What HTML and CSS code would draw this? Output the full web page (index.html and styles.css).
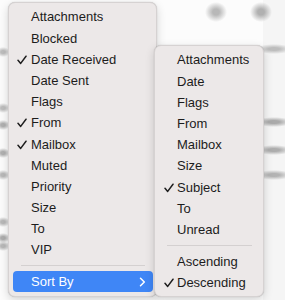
FILE: index.html
```html
<!DOCTYPE html>
<html>
<head>
<meta charset="utf-8">
<link rel="stylesheet" href="styles.css">
</head>
<body>
<div class="stage">
  <div class="menu menu-main">
    <div class="item"><span class="chk"></span><span class="lbl">Attachments</span></div>
    <div class="item"><span class="chk"></span><span class="lbl">Blocked</span></div>
    <div class="item"><span class="chk"><svg width="10" height="10" viewBox="0 0 10 10"><path d="M1 5.2 L3.7 8.4 L9 1.2" fill="none" stroke="#1e1e1e" stroke-width="1.5" stroke-linecap="round" stroke-linejoin="round"/></svg></span><span class="lbl">Date Received</span></div>
    <div class="item"><span class="chk"></span><span class="lbl">Date Sent</span></div>
    <div class="item"><span class="chk"></span><span class="lbl">Flags</span></div>
    <div class="item"><span class="chk"><svg width="10" height="10" viewBox="0 0 10 10"><path d="M1 5.2 L3.7 8.4 L9 1.2" fill="none" stroke="#1e1e1e" stroke-width="1.5" stroke-linecap="round" stroke-linejoin="round"/></svg></span><span class="lbl">From</span></div>
    <div class="item"><span class="chk"><svg width="10" height="10" viewBox="0 0 10 10"><path d="M1 5.2 L3.7 8.4 L9 1.2" fill="none" stroke="#1e1e1e" stroke-width="1.5" stroke-linecap="round" stroke-linejoin="round"/></svg></span><span class="lbl">Mailbox</span></div>
    <div class="item"><span class="chk"></span><span class="lbl">Muted</span></div>
    <div class="item"><span class="chk"></span><span class="lbl">Priority</span></div>
    <div class="item"><span class="chk"></span><span class="lbl">Size</span></div>
    <div class="item"><span class="chk"></span><span class="lbl">To</span></div>
    <div class="item"><span class="chk"></span><span class="lbl">VIP</span></div>
    <div class="sep"></div>
    <div class="item active"><span class="chk"></span><span class="lbl">Sort By</span><svg class="chev" width="7" height="10" viewBox="0 0 7 10"><path d="M1.5 1.2 L5.3 5 L1.5 8.8" fill="none" stroke="#ffffff" stroke-width="1.5" stroke-linecap="round" stroke-linejoin="round"/></svg></div>
  </div>

  <div class="menu menu-sub">
    <div class="item"><span class="chk"></span><span class="lbl">Attachments</span></div>
    <div class="item"><span class="chk"></span><span class="lbl">Date</span></div>
    <div class="item"><span class="chk"></span><span class="lbl">Flags</span></div>
    <div class="item"><span class="chk"></span><span class="lbl">From</span></div>
    <div class="item"><span class="chk"></span><span class="lbl">Mailbox</span></div>
    <div class="item"><span class="chk"></span><span class="lbl">Size</span></div>
    <div class="item"><span class="chk"><svg width="10" height="10" viewBox="0 0 10 10"><path d="M1 5.2 L3.7 8.4 L9 1.2" fill="none" stroke="#1e1e1e" stroke-width="1.5" stroke-linecap="round" stroke-linejoin="round"/></svg></span><span class="lbl">Subject</span></div>
    <div class="item"><span class="chk"></span><span class="lbl">To</span></div>
    <div class="item"><span class="chk"></span><span class="lbl">Unread</span></div>
    <div class="sep"></div>
    <div class="item"><span class="chk"></span><span class="lbl">Ascending</span></div>
    <div class="item"><span class="chk"><svg width="10" height="10" viewBox="0 0 10 10"><path d="M1 5.2 L3.7 8.4 L9 1.2" fill="none" stroke="#1e1e1e" stroke-width="1.5" stroke-linecap="round" stroke-linejoin="round"/></svg></span><span class="lbl">Descending</span></div>
  </div>
</div>
</body>
</html>
```

FILE: styles.css
```css
* { box-sizing: border-box; }

html, body {
  margin: 0;
  padding: 0;
}

body {
  width: 285px;
  height: 300px;
  overflow: hidden;
  font-family: "Liberation Sans", Arial, sans-serif;
  font-size: 13px;
  color: #222;
  background-color: #fcfcfc;
  background-image:
    radial-gradient(ellipse 11px 10px at 216px 12px, #b8b8b8 30%, rgba(184,184,184,0) 100%),
    radial-gradient(ellipse 11px 10px at 261px 12px, #b0b0b0 30%, rgba(176,176,176,0) 100%),
    radial-gradient(ellipse 18px 5px at 274px 49px, #bdbdbd 30%, rgba(189,189,189,0) 100%),
    radial-gradient(ellipse 18px 5px at 274px 122px, #aaaaaa 30%, rgba(170,170,170,0) 100%),
    radial-gradient(ellipse 18px 5px at 274px 150px, #adadad 30%, rgba(173,173,173,0) 100%),
    radial-gradient(ellipse 18px 5px at 274px 175px, #b3b3b3 30%, rgba(179,179,179,0) 100%),
    radial-gradient(ellipse 7px 5px at 3px 52px, #bdbdbd 30%, rgba(189,189,189,0) 100%),
    radial-gradient(ellipse 7px 5px at 3px 108px, #bdbdbd 30%, rgba(189,189,189,0) 100%),
    radial-gradient(ellipse 7px 5px at 3px 125px, #b0b0b0 30%, rgba(176,176,176,0) 100%),
    radial-gradient(ellipse 7px 5px at 3px 153px, #b0b0b0 30%, rgba(176,176,176,0) 100%),
    radial-gradient(ellipse 7px 5px at 3px 175px, #b8b8b8 30%, rgba(184,184,184,0) 100%),
    radial-gradient(ellipse 7px 5px at 3px 222px, #b8b8b8 30%, rgba(184,184,184,0) 100%),
    radial-gradient(ellipse 7px 5px at 3px 238px, #adadad 30%, rgba(173,173,173,0) 100%),
    radial-gradient(ellipse 7px 5px at 3px 246px, #b8b8b8 30%, rgba(184,184,184,0) 100%),
    linear-gradient(#f5f5f5, #f5f5f5);
  background-repeat: no-repeat;
  background-size: auto, auto, auto, auto, auto, auto, auto, auto, auto, auto, auto, auto, auto, auto, 22px 300px;
  background-position: 0 0, 0 0, 0 0, 0 0, 0 0, 0 0, 0 0, 0 0, 0 0, 0 0, 0 0, 0 0, 0 0, 0 0, 263px 0;
}

.stage {
  position: relative;
  width: 285px;
  height: 300px;
}

.menu {
  position: absolute;
  background: #ece8e8;
  border: 1px solid #d6d2d2;
  border-radius: 7px;
  box-shadow: 0 3px 10px rgba(0, 0, 0, 0.16), 0 0 1px rgba(0, 0, 0, 0.25);
  padding: 3.4px 3.5px;
  display: flex;
  flex-direction: column;
}

.menu-main {
  left: 8px;
  top: 2px;
  width: 149px;
}

.menu-sub {
  left: 154px;
  top: 45px;
  width: 110px;
}

.item {
  height: 21.2px;
  display: flex;
  align-items: center;
  border-radius: 4px;
  white-space: nowrap;
}

.chk {
  width: 18.5px;
  flex: none;
  display: flex;
  align-items: center;
  padding-left: 4.5px;
}

.chk svg {
  display: block;
  margin-top: 1px;
}

.lbl {
  flex: 1;
  line-height: 21.2px;
  color: #1c1c1c;
}

.menu-sub .chk {
  padding-left: 5.5px;
}

.item.active {
  background: #3f86f6;
}

.item.active .lbl {
  color: #ffffff;
}

.chev {
  flex: none;
  margin-right: 7px;
}

.sep {
  height: 10.5px;
  display: flex;
  align-items: center;
  padding: 0 8px;
}

.sep::before {
  content: "";
  display: block;
  flex: 1;
  height: 1px;
  background: #d4d0d0;
}
```
